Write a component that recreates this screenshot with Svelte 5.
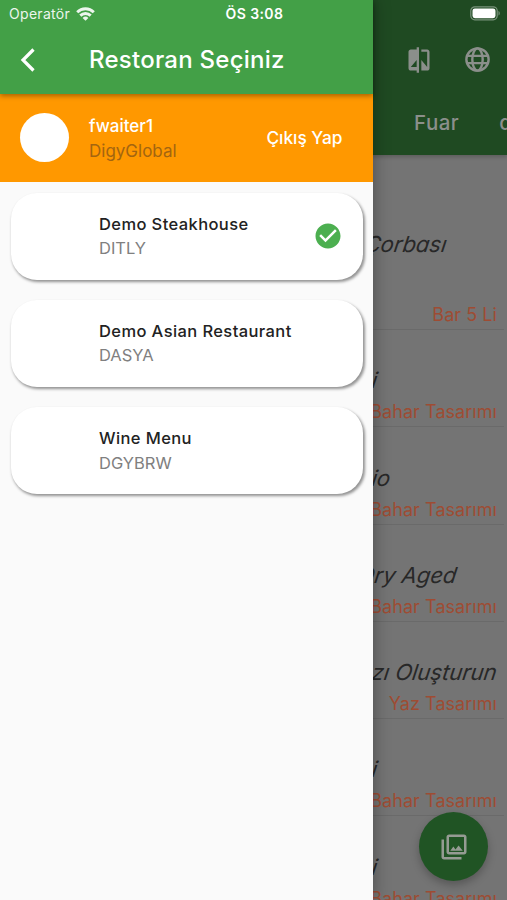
<script>
	import { writable } from 'svelte/store';

	const restaurants = [
		{ name: 'Demo Steakhouse', code: 'DITLY' },
		{ name: 'Demo Asian Restaurant', code: 'DASYA' },
		{ name: 'Wine Menu', code: 'DGYBRW' }
	];

	const designs = [
		{ title: 'Çorbası', design: 'Bar 5 Li', pad: 50, tall: true },
		{ title: 'i', design: 'Bahar Tasarımı', pad: 120 },
		{ title: 'io', design: 'Bahar Tasarımı', pad: 106 },
		{ title: 'Dry Aged', design: 'Bahar Tasarımı', pad: 40 },
		{ title: 'zı Oluşturun', design: 'Yaz Tasarımı', pad: 0 },
		{ title: 'i', design: 'Bahar Tasarımı', pad: 120 },
		{ title: 'i', design: 'Bahar Tasarımı', pad: 120 }
	];

	const selected = writable('DITLY');
</script>

<div class="app">
	<main class="page">
		<header class="page-bar">
			<div class="actions">
				<svg width="28" height="28" viewBox="0 0 24 24" fill="currentColor">
					<path
						d="M10 3H5c-1.1 0-2 .9-2 2v14c0 1.1.9 2 2 2h5v2h2V1h-2v2zm0 15H5l5-6v6zm9-15h-5v2h5v13l-5-6v9h5c1.1 0 2-.9 2-2V5c0-1.1-.9-2-2-2z"
					/>
				</svg>
				<svg width="29" height="29" viewBox="0 0 24 24" fill="none" stroke="currentColor" stroke-width="2">
					<circle cx="12" cy="12" r="9.2" />
					<ellipse cx="12" cy="12" rx="4.3" ry="9.2" />
					<path d="M3.5 9h17M3.5 15h17" />
				</svg>
			</div>
			<nav class="tabs">
				<span>Fuar</span>
				<span>d</span>
			</nav>
		</header>

		<ul class="designs">
			{#each designs as item}
				<li class:tall={item.tall}>
					<em style="padding-right: {item.pad}px">{item.title}</em>
					<span>{item.design}</span>
				</li>
			{/each}
		</ul>

		<button class="fab" aria-label="Galeri">
			<svg width="30" height="30" viewBox="0 0 24 24" fill="currentColor">
				<path
					d="M20 4v12H8V4h12m0-2H8c-1.1 0-2 .9-2 2v12c0 1.1.9 2 2 2h12c1.1 0 2-.9 2-2V4c0-1.1-.9-2-2-2zm-8.5 9.67l1.69 2.26 2.48-3.1L19 15H9zM2 6v14c0 1.1.9 2 2 2h14v-2H4V6H2z"
				/>
			</svg>
		</button>
	</main>

	<aside class="drawer">
		<header class="drawer-bar">
			<button class="back" aria-label="Geri">
				<svg width="18" height="26" viewBox="0 0 18 26" fill="none" stroke="currentColor" stroke-width="3.2">
					<path d="M15.5 2.500 5 13l10.500 10.500" />
				</svg>
			</button>
			<h1>Restoran Seçiniz</h1>
		</header>

		<section class="account">
			<div class="avatar"></div>
			<div class="who">
				<strong>fwaiter1</strong>
				<span>DigyGlobal</span>
			</div>
			<button class="logout">Çıkış Yap</button>
		</section>

		<div class="restaurants">
			{#each restaurants as restaurant}
				<button class="card" on:click={() => selected.set(restaurant.code)}>
					<span class="label">
						<strong>{restaurant.name}</strong>
						<span>{restaurant.code}</span>
					</span>
					{#if $selected === restaurant.code}
						<svg width="30" height="30" viewBox="0 0 24 24" fill="#4caf50">
							<path
								d="M12 2C6.480 2 2 6.480 2 12s4.480 10 10 10 10-4.480 10-10S17.520 2 12 2zm-2 15l-5-5 1.410-1.410L10 14.170l7.590-7.590L19 8l-9 9z"
							/>
						</svg>
					{/if}
				</button>
			{/each}
		</div>
	</aside>

	<div class="status">
		<span class="carrier">
			Operatör
			<svg width="19" height="14" viewBox="0 0 19 14" fill="none" stroke="#fff" stroke-width="2.9">
				<path d="M1.200 5.200a11.800 11.800 0 0 1 16.600 0M4.300 8.600a7.400 7.400 0 0 1 10.400 0" />
				<path d="M9.500 13.800 6.600 10.900a4.200 4.200 0 0 1 5.800 0z" fill="#fff" stroke="none" />
			</svg>
		</span>
		<span class="time">ÖS 3:08</span>
		<svg class="battery" width="31" height="15" viewBox="0 0 31 15">
			<rect x=".8" y=".8" width="26.400" height="13" rx="4" fill="none" stroke="#fff" stroke-opacity=".4" stroke-width="1.200" />
			<rect x="2.500" y="2.400" width="23" height="9.800" rx="2.400" fill="#fff" />
			<path d="M28.500 5v4.600c1.700-.7 1.700-3.900 0-4.600z" fill="#fff" fill-opacity=".4" />
		</svg>
	</div>
</div>

<style>
	:global(body) {
		margin: 0;
	}

	.app {
		position: relative;
		width: 507px;
		height: 900px;
		overflow: hidden;
		font-family: Inter, 'Liberation Sans', sans-serif;
	}

	button {
		border: 0;
		padding: 0;
		background: none;
		font: inherit;
		color: inherit;
	}

	svg {
		display: block;
	}

	.page {
		height: 900px;
		background: #747474;
		overflow: hidden;
	}

	.page-bar {
		height: 155px;
		box-sizing: border-box;
		padding-top: 45px;
		background: #1f4a22;
		color: #8b8f8b;
		box-shadow: 0 2px 4px rgba(0, 0, 0, 0.2);
	}

	.actions {
		display: flex;
		align-items: center;
		justify-content: flex-end;
		gap: 30px;
		height: 29px;
		padding-right: 15px;
	}

	.tabs {
		display: flex;
		gap: 40px;
		margin: 36px 0 0 414px;
		font-size: 20.500px;
		font-weight: 550;
		line-height: 26px;
		letter-spacing: 0.5px;
	}

	.designs {
		list-style: none;
		margin: 0;
		padding: 0 3px 0 0;
	}

	.designs li {
		display: flex;
		flex-direction: column;
		align-items: flex-end;
		justify-content: flex-end;
		box-sizing: border-box;
		height: 97.300px;
		padding: 0 7px 3px 0;
		border-bottom: 1px solid #6a6a6a;
		white-space: nowrap;
	}

	.designs .tall {
		height: 175px;
	}

	/* titles lean further than the family's own italic */
	.designs em {
		margin-bottom: 2px;
		font-size: 22px;
		line-height: 28px;
		color: #282828;
		transform: skewX(-9deg);
	}

	.designs .tall em {
		margin-bottom: 41px;
	}

	.designs span {
		margin-top: 5px;
		font-size: 18px;
		line-height: 22px;
		letter-spacing: 0.05px;
		color: #9e4c33;
	}

	.fab {
		position: absolute;
		left: 419px;
		top: 812px;
		display: grid;
		place-items: center;
		width: 69px;
		height: 69px;
		border-radius: 50%;
		background: #205424;
		color: #959b93;
		box-shadow: 0 4px 8px rgba(0, 0, 0, 0.25);
	}

	.drawer {
		position: absolute;
		left: 0;
		top: 0;
		width: 372.500px;
		height: 900px;
		background: #fafafa;
		box-shadow: 0 0 16px rgba(0, 0, 0, 0.35);
	}

	.drawer-bar {
		position: relative;
		display: flex;
		align-items: center;
		box-sizing: border-box;
		height: 94px;
		padding: 25px 0 0 18px;
		background: #43a047;
		color: #fff;
		box-shadow: 0 2px 5px rgba(0, 0, 0, 0.35);
	}

	.drawer-bar h1 {
		margin: 0 0 0 53px;
		font-size: 24px;
		font-weight: 550;
		letter-spacing: 0.25px;
	}

	.account {
		display: flex;
		align-items: center;
		box-sizing: border-box;
		height: 87.500px;
		padding: 0 30px 0 20px;
		background: #ff9800;
	}

	.avatar {
		width: 49px;
		height: 49px;
		border-radius: 50%;
		background: #fff;
	}

	.who {
		display: flex;
		flex-direction: column;
		flex: 1;
		margin: 2px 0 0 20px;
		font-size: 17px;
		line-height: 24.500px;
		color: #a36510;
	}

	.who strong {
		font-weight: 550;
		color: #fff;
	}

	.logout {
		margin-top: -1px;
		font-size: 17.300px;
		font-weight: 550;
		color: #fff;
	}

	.restaurants {
		display: flex;
		flex-direction: column;
		gap: 20px;
		padding: 11px 10px 0 11px;
	}

	.card {
		display: flex;
		align-items: center;
		justify-content: space-between;
		box-sizing: border-box;
		height: 87.300px;
		padding: 0 20px 1px 88px;
		border-radius: 26px;
		background: #fff;
		box-shadow: 1.500px 2px 3px rgba(0, 0, 0, 0.42);
		text-align: left;
	}

	.label {
		display: flex;
		flex-direction: column;
		padding-top: 1px;
		font-size: 16.500px;
		line-height: 24.500px;
		color: #808080;
	}

	.label strong {
		font-weight: 500;
		letter-spacing: 0.4px;
		color: #222;
	}

	.status {
		position: absolute;
		inset: 0 0 auto;
		display: grid;
		grid-template-columns: 1fr auto 1fr;
		align-items: center;
		height: 27px;
		padding: 0 6px 0 9px;
		font-size: 14px;
		color: #fff;
	}

	.carrier {
		display: flex;
		align-items: center;
		gap: 6px;
		letter-spacing: 0.3px;
		opacity: 0.9;
	}

	.time {
		margin-right: 1px;
		font-weight: 600;
		letter-spacing: 0.4px;
	}

	.battery {
		justify-self: end;
	}
</style>
